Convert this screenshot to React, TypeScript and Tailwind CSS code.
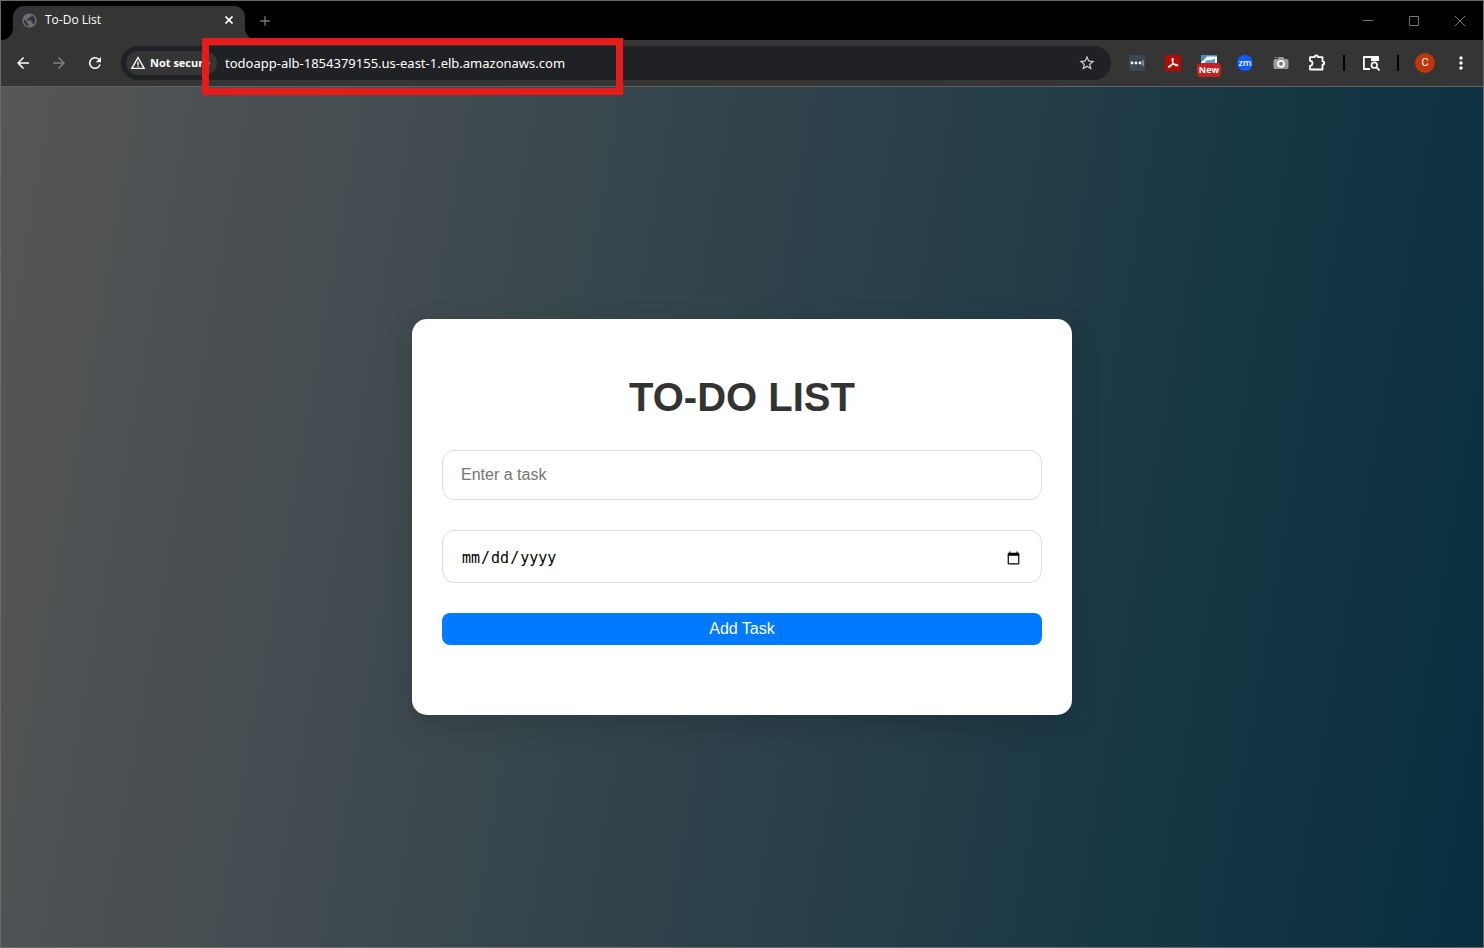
import React from "react";
import {
  MdAdd,
  MdArrowBack,
  MdArrowForward,
  MdMoreVert,
  MdPublic,
  MdRefresh,
  MdStarBorder,
  MdWarningAmber,
} from "react-icons/md";

function WindowControls() {
  const button = "flex w-[46px] items-center justify-center text-[#777777]";
  return (
    <div className="ml-auto flex self-stretch">
      <button aria-label="Minimize" className={button}>
        <svg width="10" height="10" fill="none" stroke="currentColor">
          <path d="M0 4.5h10" />
        </svg>
      </button>
      <button aria-label="Maximize" className={button}>
        <svg width="10" height="10" fill="none" stroke="currentColor">
          <path d="M.5.5h9v9h-9z" />
        </svg>
      </button>
      <button aria-label="Close window" className={button}>
        <svg width="10" height="10" fill="none" stroke="currentColor">
          <path d="M0 0l10 10M10 0L0 10" />
        </svg>
      </button>
    </div>
  );
}

function TabStrip() {
  return (
    <div className="flex h-[39px] items-center bg-black">
      <div className="flex items-end self-stretch">
        <svg width="12" height="12" className="text-[#353535]">
          <path d="M12 0v12H0A12 12 0 0 0 12 0z" fill="currentColor" />
        </svg>
        <div className="flex h-[34px] w-[232px] items-center rounded-t-[11px] bg-[#353535] px-2 pb-1.5">
          <span className="flex size-4 items-center justify-center text-[#6b7076]">
            <MdPublic size={17} className="shrink-0" />
          </span>
          <span className="ml-2 flex-1 text-[12px] leading-4 text-white">To-Do List</span>
          <button aria-label="Close tab" className="flex size-4 items-center justify-center text-white">
            <svg width="8" height="8" fill="none" stroke="currentColor" strokeWidth="1.6">
              <path d="M.5.5l7 7M7.5.5l-7 7" />
            </svg>
          </button>
        </div>
        <svg width="12" height="12" className="text-[#353535]">
          <path d="M0 0v12h12A12 12 0 0 1 0 0z" fill="currentColor" />
        </svg>
      </div>
      <button aria-label="New tab" className="flex size-4 items-center justify-center text-[#777777]">
        <MdAdd size={16} />
      </button>
      <WindowControls />
    </div>
  );
}

const tool = "flex h-9 w-9 shrink-0 items-center justify-center";

function Divider() {
  return (
    <span className="flex w-[18px] shrink-0 justify-center">
      <span className="h-4 w-0.5 bg-black" />
    </span>
  );
}

function Extensions() {
  return (
    <div className="ml-2 flex items-center">
      <button aria-label="Password manager" className={tool}>
        <svg width="16" height="16">
          <rect width="16" height="16" rx="1" fill="#3b4852" />
          <circle cx="3" cy="8" r="1.4" fill="#fff" />
          <circle cx="7" cy="8" r="1.4" fill="#fff" />
          <circle cx="11" cy="8" r="1.4" fill="#fff" />
          <path d="M14 5v6" stroke="#b9c0c5" strokeWidth="1" />
        </svg>
      </button>
      <button aria-label="PDF tools" className={tool}>
        <svg width="16" height="16">
          <rect width="16" height="16" rx="2" fill="#b30b00" />
          <path
            d="M7.6 3.4c-1 .2-.6 2.3.2 4 .9 1.7 2.600 3.500 4.300 3.400 1-.1.9-1.300-.8-1.500-2.300-.3-5.200.3-6.800 1.300-1.300.8-1.200 1.800-.4 1.700 1.200-.2 3-3 3.700-5.200.5-1.700.5-3.800-.2-3.700z"
            fill="none"
            stroke="#fff"
            strokeWidth="1.1"
          />
        </svg>
      </button>
      <button aria-label="Notes" className={`${tool} relative`}>
        <svg width="16" height="16">
          <path d="M0 0h16v9H0z" fill="#fff" />
          <path d="M0 0h16v1.500H6L3.500 4.500 0 7z" fill="#4a90c2" />
          <path d="M4 7c1-2 3-2 6-2 2 0 2.500-1.500 4-1.500V8H4z" fill="#5b9fce" />
        </svg>
        <span className="absolute top-[18px] left-[6px] h-[14px] w-6 rounded-[4px] bg-[#c5221f] text-center font-['Open_Sans',sans-serif] text-[9px] leading-[14px] font-bold text-white">
          New
        </span>
      </button>
      <button aria-label="Meetings" className={tool}>
        <span className="flex size-4 items-center justify-center rounded-full bg-[#0b5cff] pb-px text-[9px] leading-[14px] font-semibold text-white">
          zm
        </span>
      </button>
      <button aria-label="Screen capture" className={tool}>
        <svg width="16" height="16">
          <path
            d="M2 4h2.5l1-2h5l1 2H14a1.500 1.500 0 0 1 1.500 1.500v7A1.500 1.500 0 0 1 14 14H2A1.500 1.500 0 0 1 .5 12.500v-7A1.500 1.500 0 0 1 2 4z"
            fill="#9a9a9a"
          />
          <path d="M1.500 2.500h2.500" stroke="#8a8a8a" />
          <circle cx="8" cy="8.800" r="3" fill="#777" stroke="#fff" strokeWidth="1.800" />
        </svg>
      </button>
      <button aria-label="Extensions" className={tool}>
        <svg width="18" height="18" fill="none" stroke="#fff" strokeWidth="1.800">
          <path
            d="M2 3.200h4.600a1.700 1.700 0 0 1 3.400 0h4.500v4.100a1.700 1.700 0 0 1 0 3.400v4.800H2v-3.700a2.500 2.500 0 0 0 0-5z"
            strokeLinejoin="round"
          />
        </svg>
      </button>
      <Divider />
      <button aria-label="Search tabs" className={tool}>
        <svg width="18" height="16" fill="none" stroke="#fff" strokeWidth="1.800">
          <path d="M8 14H1.900V2H16v3" strokeLinejoin="round" />
          <path d="M9 1.500h8V6H9z" fill="#fff" stroke="none" />
          <circle cx="12.300" cy="10.200" r="2.800" strokeWidth="1.600" />
          <path d="M14.300 12.200l3.200 3.200" />
        </svg>
      </button>
      <Divider />
      <button aria-label="Profile" className={tool}>
        <span className="size-5 rounded-full bg-[#bf360c] text-center font-[Roboto,sans-serif] text-[11px] leading-5 text-white">
          C
        </span>
      </button>
      <button aria-label="Browser menu" className={`${tool} text-white`}>
        <MdMoreVert size={20} />
      </button>
    </div>
  );
}

function Toolbar() {
  return (
    <div className="flex h-[47px] items-center border-b border-[#616161] bg-[#353535] px-1">
      <button aria-label="Back" className={`${tool} text-white`}>
        <MdArrowBack size={18} />
      </button>
      <button aria-label="Forward" className={`${tool} text-[#808080]`}>
        <MdArrowForward size={18} />
      </button>
      <button aria-label="Reload" className={`${tool} text-white`}>
        <MdRefresh size={18} />
      </button>
      <div className="relative ml-2 flex h-[34px] min-w-0 flex-1 items-center rounded-full bg-[#202124] pr-[15px] pl-[5px]">
        <button className="flex h-6 w-[91px] shrink-0 items-center rounded-full bg-[#353535] pl-1 text-[11px] font-bold whitespace-nowrap text-white">
          <MdWarningAmber size={16} className="mr-1 shrink-0" />
          Not secure
        </button>
        <input
          aria-label="Address"
          type="text"
          defaultValue="todoapp-alb-1854379155.us-east-1.elb.amazonaws.com"
          className="ml-2 min-w-0 flex-1 bg-transparent font-['Noto_Sans',sans-serif] text-[13px] leading-5 text-white outline-none"
        />
        <button aria-label="Bookmark this page" className="flex size-[18px] items-center justify-center text-[#d0d0d0]">
          <MdStarBorder size={18} />
        </button>
        <div className="pointer-events-none absolute -top-2 left-[81px] h-[57px] w-[421px] border-[7px] border-[#e81b1b]" />
      </div>
      <Extensions />
    </div>
  );
}

const field = "block w-full rounded-[12px] border border-[#dddddd] bg-white outline-none";

function TodoCard() {
  return (
    <section className="w-full max-w-[660px] rounded-[15px] bg-white px-[30px] pt-12 pb-[70px] shadow-[0_10px_30px_rgba(0,0,0,0.15)]">
      <h1 className="mb-[23px] text-center text-[40px] leading-[60px] font-bold text-[#333333]">TO-DO LIST</h1>
      <form onSubmit={(event) => event.preventDefault()}>
        <input
          type="text"
          aria-label="Task"
          placeholder="Enter a task"
          className={`${field} h-[50px] px-[18px] text-[16px] placeholder:text-[#757575]`}
        />
        <input
          type="date"
          aria-label="Due date"
          className={`${field} mt-[30px] h-[53px] px-[18px] pt-[3px] font-['DejaVu_Sans_Mono',monospace] text-[15px] text-black`}
        />
        <button
          type="submit"
          className="mt-[30px] block h-8 w-full rounded-[8px] bg-[#007bff] text-center text-[16px] text-white"
        >
          Add Task
        </button>
      </form>
    </section>
  );
}

export default function App() {
  return (
    <div className="flex min-h-screen flex-col border border-[#6a6a6a]">
      <header className="font-['Open_Sans','Noto_Sans',sans-serif]">
        <TabStrip />
        <Toolbar />
      </header>
      <main className="flex flex-1 items-center justify-center bg-[linear-gradient(100deg,#575656,#062e3f)] font-['Liberation_Sans',Arial,sans-serif]">
        <TodoCard />
      </main>
    </div>
  );
}
